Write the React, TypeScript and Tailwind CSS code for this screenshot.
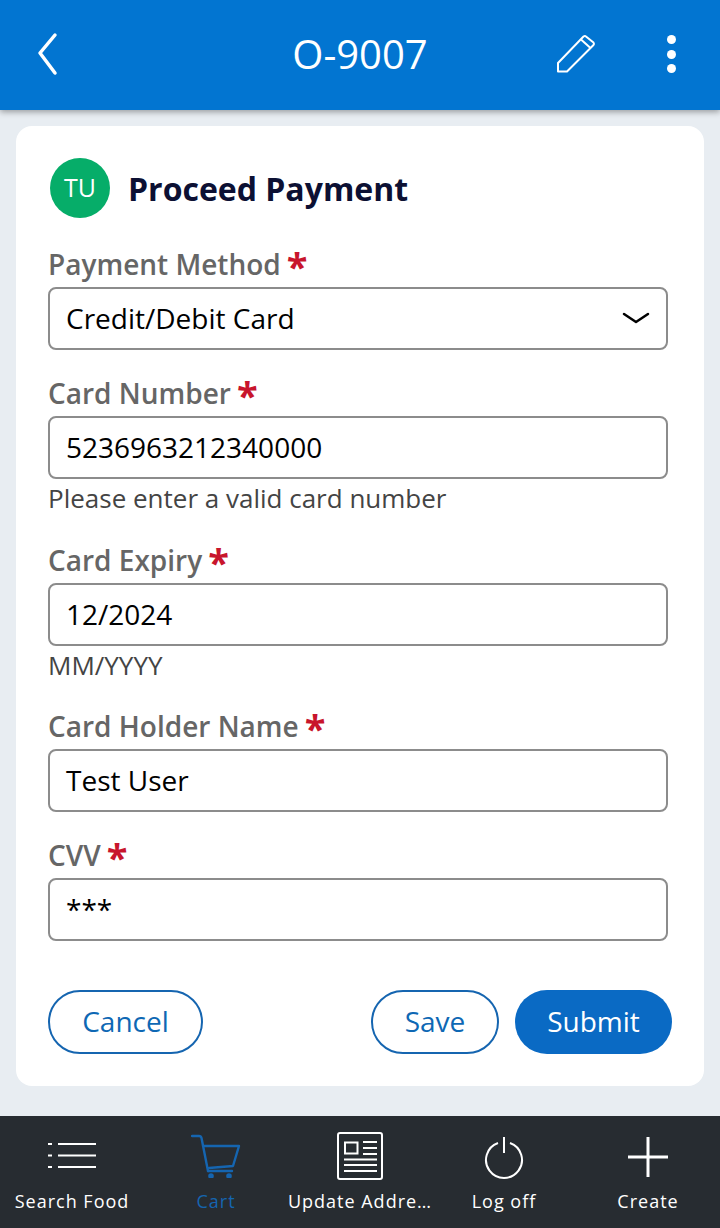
const font = { fontFamily: '"Open Sans", "Noto Sans", sans-serif' };

function Field({ label, value, hint, hintClass, caret }: { label: string; value: string; hint?: string; hintClass?: string; caret?: boolean }) {
  return (
    <div className="flex flex-col w-[620px]">
      <div className="h-[38px] flex items-start text-[28px] leading-[30px] font-semibold text-[#666666]">
        <span>{label}</span>
        <span className="ml-[6px] -mt-[2px] text-[#c8152c] text-[38px] leading-[38px] font-bold">*</span>
      </div>
      <div className="h-[63px] rounded-[8px] border-2 border-[#8c8c8c] bg-white flex items-center justify-between pl-[16px] pr-[16px] pb-[1px] text-[28px] text-black">
        <span>{value}</span>
        {caret && (
          <svg width="28" height="14" viewBox="0 0 28 14" fill="none" stroke="#000" strokeWidth="2.5" strokeLinecap="round" strokeLinejoin="round">
            <path d="M2 3 L14 11 L26 3" />
          </svg>
        )}
      </div>
      {hint && <div className={`${hintClass} pt-[1px] text-[26px] leading-[36px] text-[#444444]`}>{hint}</div>}
    </div>
  );
}

function NavItem({ label, active, children }: { label: string; active?: boolean; children: React.ReactNode }) {
  return (
    <div className="flex-1 min-w-0 flex flex-col items-center">
      <div className="h-[66px] flex items-end justify-center">{children}</div>
      <div className={`mt-[5px] text-[18px] leading-[26px] tracking-[1px] whitespace-nowrap ${active ? "text-[#1565b0]" : "text-white"}`}>{label}</div>
    </div>
  );
}

export default function App() {
  return (
    <div className="w-[720px] h-[1228px] bg-[#e8edf2] flex flex-col overflow-hidden" style={font}>
      <header className="h-[110px] shrink-0 bg-[#0275d1] shadow-[0_2px_6px_rgba(0,0,0,0.35)] flex items-center justify-between relative text-white">
        <svg className="ml-[36px] -mt-[2px]" width="24" height="44" viewBox="0 0 24 44" fill="none" stroke="#fff" strokeWidth="3.5" strokeLinecap="round" strokeLinejoin="round">
          <path d="M19 3 L4 21 L19 41" />
        </svg>
        <div className="absolute left-0 right-0 -mt-[3px] text-center text-[40px] leading-[50px]">O-9007</div>
        <div className="flex items-center mr-[44px] -mt-[2px]">
          <svg className="mr-[71px]" width="40" height="40" viewBox="0 0 40 40" fill="none" stroke="#fff" strokeWidth="2" strokeLinejoin="round">
            <path d="M2 29 L27.5 2.5 Q29 1.5 30 2.5 L37.5 8.5 Q38.5 10 37.5 11 L11 37.5 L2 37.5 Z" />
            <path d="M25 5.5 L34.5 14" />
          </svg>
          <div className="flex flex-col gap-[5.5px]">
            <div className="w-[9px] h-[9px] rounded-full bg-white" />
            <div className="w-[9px] h-[9px] rounded-full bg-white" />
            <div className="w-[9px] h-[9px] rounded-full bg-white" />
          </div>
        </div>
      </header>

      <main className="mt-[16px] mx-[16px] h-[960px] bg-white rounded-[16px] pl-[32px] pr-[32px] pt-[32px]">
        <div className="flex items-center h-[60px] ml-[2px]">
          <div className="w-[60px] h-[60px] rounded-full bg-[#06ad69] text-white text-[25px] flex items-center justify-center">TU</div>
          <div className="ml-[18px] mt-[2px] text-[32px] font-bold text-[#0c1033]">Proceed Payment</div>
        </div>
        <div className="mt-[31px] flex flex-col gap-[28px]">
          <Field label="Payment Method" value="Credit/Debit Card" caret />
          <Field label="Card Number" value="5236963212340000" hint="Please enter a valid card number" hintClass="h-[38px]" />
          <Field label="Card Expiry" value="12/2024" hint="MM/YYYY" hintClass="h-[37px]" />
          <Field label="Card Holder Name" value="Test User" />
          <Field label="CVV" value="***" />
        </div>
        <div className="mt-[49px] flex items-center text-[28px]">
          <button className="w-[155px] h-[64px] pb-[2px] rounded-full border-2 border-[#1565b0] text-[#0e68b4]">Cancel</button>
          <button className="ml-auto w-[128px] h-[64px] pb-[2px] rounded-full border-2 border-[#1565b0] text-[#0e68b4]">Save</button>
          <button className="ml-[16px] w-[157px] h-[64px] pb-[2px] rounded-full bg-[#0a6ac4] text-white">Submit</button>
        </div>
      </main>

      <footer className="mt-auto h-[112px] shrink-0 bg-[#272c31] flex pt-[1px]">
        <NavItem label="Search Food">
          <svg width="52" height="34" viewBox="0 0 52 34" fill="none" stroke="#fff" strokeWidth="2" className="mb-[7px]">
            <path d="M2 2H6M2 13.5H6M2 25H6M12 2H50M12 13.5H50M12 25H50" />
          </svg>
        </NavItem>
        <NavItem label="Cart" active>
          <svg width="50" height="46" viewBox="0 0 50 46" fill="none" stroke="#1565b0" strokeWidth="2.4" strokeLinejoin="round" strokeLinecap="round" className="mb-[5px]">
            <path d="M1 4H8Q10 4 10.5 6L17 39" />
            <path d="M12 14H48L42 34L18 36" />
            <path d="M17 39H41" />
            <circle cx="20" cy="44" r="1.6" fill="#1565b0" />
            <circle cx="38" cy="44" r="1.6" fill="#1565b0" />
          </svg>
        </NavItem>
        <NavItem label="Update Addre…">
          <svg width="46" height="48" viewBox="0 0 46 48" fill="none" stroke="#fff" strokeWidth="2" className="mb-[3px]">
            <rect x="1" y="1" width="44" height="46" rx="2" />
            <rect x="8" y="10.5" width="12.5" height="11" />
            <path d="M26 10H40M26 16H40M26 22H40M7 27.5H40M7 33H40M7 39H40" />
          </svg>
        </NavItem>
        <NavItem label="Log off">
          <svg width="40" height="42" viewBox="0 0 40 42" fill="none" stroke="#fff" strokeWidth="2" className="mb-[4px]">
            <path d="M14 6 A18 18 0 1 0 26 6" />
            <path d="M20 0V16" />
          </svg>
        </NavItem>
        <NavItem label="Create">
          <svg width="42" height="42" viewBox="0 0 42 42" fill="none" stroke="#fff" strokeWidth="3" className="mb-[5px]">
            <path d="M21 1V41M1 21H41" />
          </svg>
        </NavItem>
      </footer>
    </div>
  );
}
